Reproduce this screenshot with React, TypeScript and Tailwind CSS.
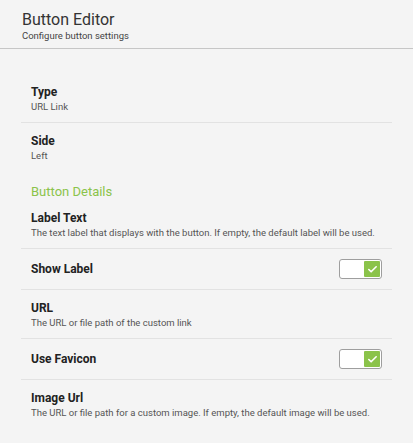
import { Check } from 'lucide-react';

interface SettingRowProps {
  title: string;
  description?: string;
  toggle?: boolean;
  divider?: boolean;
}

function Toggle({ checked }: { checked: boolean }) {
  return (
    <div className="w-[43px] h-[20px] rounded-[3px] border-[1.5px] border-[#9e9e9e] bg-white flex items-center justify-end px-[1px]">
      {checked && (
        <div className="w-[16px] h-[16px] rounded-[1px] bg-[#8bc34a] flex items-center justify-center">
          <Check className="w-[11px] h-[11px] text-white" strokeWidth={3.5} />
        </div>
      )}
    </div>
  );
}

function SettingRow({ title, description, toggle, divider = true }: SettingRowProps) {
  return (
    <div className={divider ? 'border-b border-[#e2e2e2]' : ''}>
      {toggle ? (
        <div className="h-[40px] px-[10px] flex items-center justify-between">
          <span className="text-[12px] font-bold text-[#222]">{title}</span>
          <Toggle checked />
        </div>
      ) : (
        <div className="h-[48px] px-[10px] pt-[11px]">
          <div className="text-[12px] leading-[15px] font-bold text-[#222]">{title}</div>
          <div className="text-[9.5px] leading-[12px] mt-[1px] text-[#555]">{description}</div>
        </div>
      )}
    </div>
  );
}

export default function App() {
  return (
    <div className="w-[413px] h-[443px] bg-[#f4f4f4] font-['Roboto',sans-serif] overflow-hidden">
      {/* Header */}
      <div className="h-[49px] px-[22px] pt-[10px] border-b border-[#c6c6c6]">
        <h1 className="text-[16px] leading-[20px] text-[#333]">Button Editor</h1>
        <p className="text-[9.5px] leading-[12px] text-[#444]">Configure button settings</p>
      </div>

      {/* Content */}
      <div className="mx-[21px] pt-[25px]">
        <SettingRow title="Type" description="URL Link" />
        <SettingRow title="Side" description="Left" divider={false} />

        <h2 className="mt-[13px] px-[10px] text-[13px] leading-[16px] text-[#8bc34a]">Button Details</h2>

        <SettingRow
          title="Label Text"
          description="The text label that displays with the button. If empty, the default label will be used."
        />
        <SettingRow title="Show Label" toggle />
        <SettingRow title="URL" description="The URL or file path of the custom link" />
        <SettingRow title="Use Favicon" toggle />
        <SettingRow
          title="Image Url"
          description="The URL or file path for a custom image. If empty, the default image will be used."
          divider={false}
        />
      </div>
    </div>
  );
}
